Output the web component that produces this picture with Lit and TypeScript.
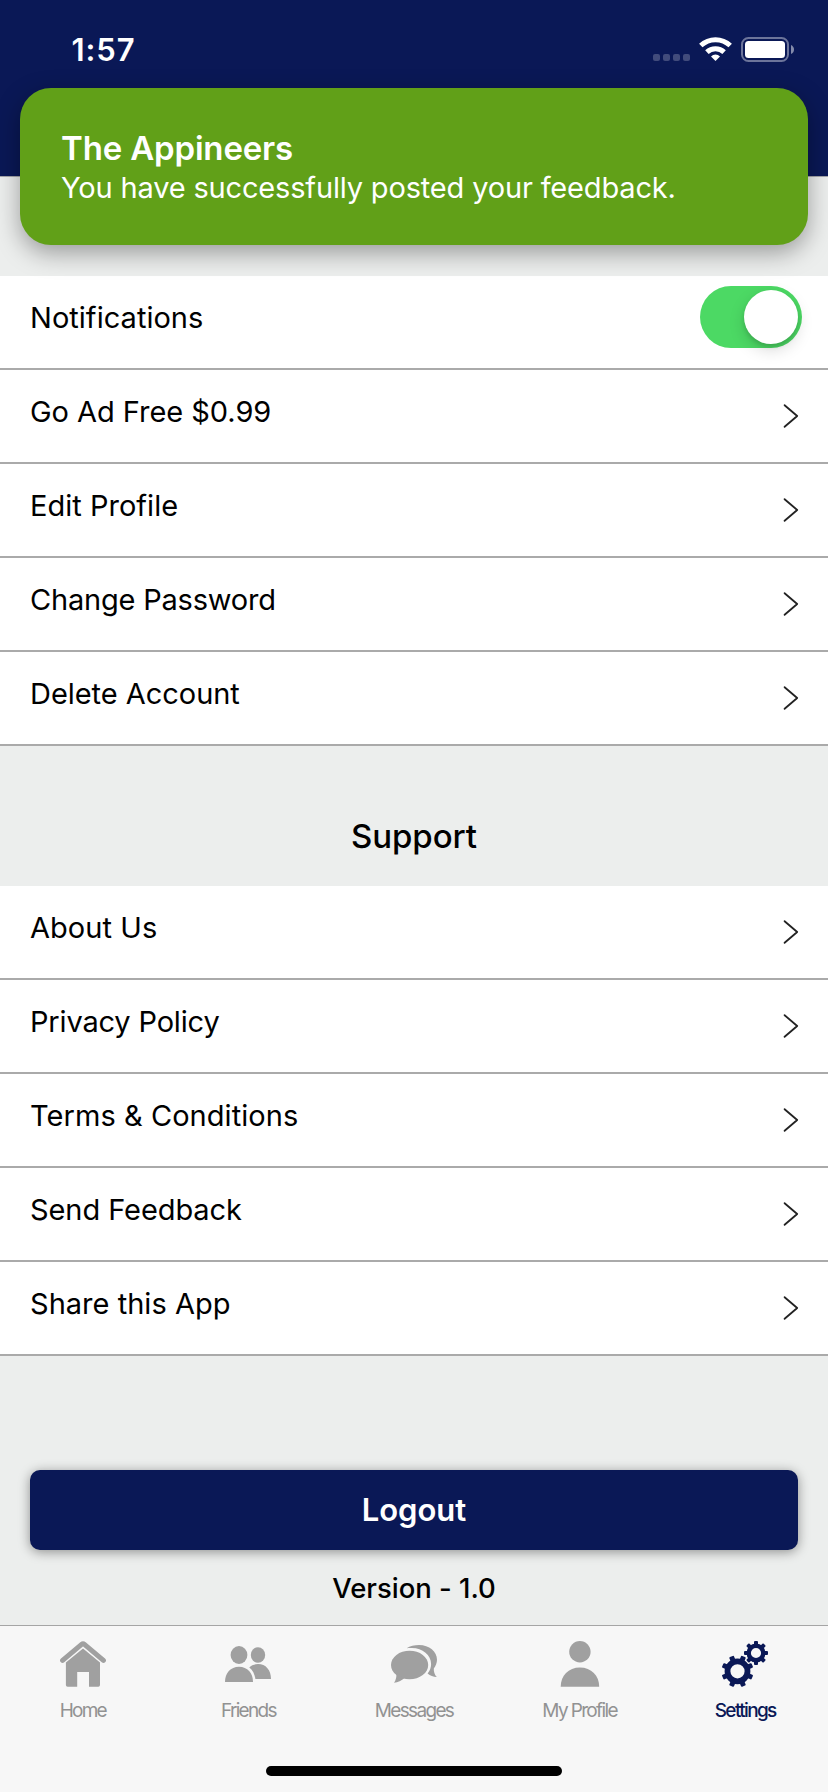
import { LitElement, html, svg, css } from "lit";
import { customElement, property } from "lit/decorators.js";
import { classMap } from "lit/directives/class-map.js";
import { styleMap } from "lit/directives/style-map.js";

interface Item {
  label: string;
  tracking: number;
  toggle?: boolean;
}

const ACCOUNT: Item[] = [
  { label: "Notifications", tracking: 0.03, toggle: true },
  { label: "Go Ad Free $0.99", tracking: -0.05 },
  { label: "Edit Profile", tracking: 0.02 },
  { label: "Change Password", tracking: -0.2 },
  { label: "Delete Account", tracking: -0.04 },
];

const SUPPORT: Item[] = [
  { label: "About Us", tracking: 0.05 },
  { label: "Privacy Policy", tracking: -0.17 },
  { label: "Terms & Conditions", tracking: 0.06 },
  { label: "Send Feedback", tracking: -0.08 },
  { label: "Share this App", tracking: 0.02 },
];

const gear = (
  cx: number,
  cy: number,
  ring: number,
  ringWidth: number,
  outer: number,
  tooth: number,
  offset: number
) => svg`
  <g transform="translate(${cx} ${cy})">
    <circle r=${ring} fill="none" stroke="currentColor" stroke-width=${ringWidth} />
    ${[0, 1, 2, 3, 4, 5, 6, 7].map(
      (i) => svg`<rect x=${-tooth / 2} y=${-outer} width=${tooth} height=${outer - ring}
        rx="1" transform="rotate(${i * 45 + offset})" fill="currentColor" />`
    )}
  </g>`;

const TABS = [
  {
    label: "Home",
    tracking: -1.82,
    icon: svg`
      <path d="M2.6 19.4 L21.6 3.4 Q23 2.2 24.4 3.4 L43.4 19.4" fill="none" stroke="currentColor"
        stroke-width="5" stroke-linecap="round" stroke-linejoin="round" />
      <path d="M23 7.4 L40 21.6 V44 Q40 45.7 38.3 45.7 H29 V31 H17.2 V45.7 H7.6 Q5.9 45.7 5.9 44 V21.6 Z"
        fill="currentColor" stroke="#f7f7f7" stroke-width="1.2" paint-order="stroke" />`,
  },
  {
    label: "Friends",
    tracking: -1.72,
    icon: svg`
      <g fill="currentColor">
        <ellipse cx="14" cy="14" rx="8.4" ry="9" />
        <path d="M0 41 C0 32 5.5 25.7 14 25.7 S28 32 28 41 Z" />
        <ellipse cx="33" cy="14" rx="7.2" ry="7.8" />
        <path d="M24.3 26.4 C26.5 24.2 29.5 23 33 23 C40.8 23 46 29 46 38 H30.4 C29.8 33.2 27.8 29 24.3 26.4 Z" />
      </g>`,
  },
  {
    label: "Messages",
    tracking: -1.65,
    icon: svg`
      <g fill="currentColor">
        <ellipse cx="18.6" cy="24" rx="18.6" ry="14.3" />
        <path d="M5.2 32 Q6 37.5 3 41.8 Q9 41 13.6 37 Z" />
        <path d="M15.6 7.2 C19 5.2 23.5 4 28 4 C38.3 4 46 10.4 46 18.8 C46 22 44.8 25 42.8 27.4
          C42.6 30.6 43.6 33.6 45.8 36 C42.4 35.8 39 34.6 36.6 32.4 C39 29.6 40.1 26.5 40.1 23
          C40.1 14.2 31.5 7 21 7 C19.1 7 17.4 6.9 15.6 7.2 Z" />
      </g>`,
  },
  {
    label: "My Profile",
    tracking: -1.65,
    icon: svg`
      <g fill="currentColor">
        <circle cx="22.9" cy="10.7" r="10.7" />
        <path d="M3.7 45.7 C3.7 34.5 11.5 26.4 22.9 26.4 S42.2 34.5 42.2 45.7 Z" />
      </g>`,
  },
  {
    label: "Settings",
    tracking: -1.65,
    active: true,
    icon: svg`${gear(15.5, 30.3, 10, 5.8, 16, 5, 22.5)}${gear(34, 12, 7.3, 4.4, 12, 4, 0)}`,
  },
];

@customElement("settings-row")
export class SettingsRow extends LitElement {
  @property() label = "";
  @property({ type: Number }) tracking = 0;
  @property({ type: Boolean }) toggle = false;

  static styles = css`
    :host {
      display: block;
    }
    .row {
      box-sizing: border-box;
      height: 94px;
      display: flex;
      justify-content: space-between;
      padding: 0 26px 0 30px;
      background: #fff;
      border-bottom: 2px solid #aaa;
    }
    .label {
      font-size: 29px;
      line-height: 83px;
      color: #000;
      white-space: nowrap;
    }
    .chevron {
      align-self: center;
      width: 16px;
      height: 26px;
      margin-right: 3px;
    }
    .switch {
      box-sizing: border-box;
      width: 102px;
      height: 62px;
      margin-top: 10px;
      padding: 4px;
      display: flex;
      justify-content: flex-end;
      border-radius: 31px;
      background: #4cd964;
    }
    .knob {
      width: 54px;
      height: 54px;
      border-radius: 50%;
      background: #fff;
      box-shadow: 0 6px 16px rgba(0, 0, 0, 0.15), 0 3px 4px rgba(0, 0, 0, 0.12);
    }
  `;

  render() {
    return html`<div class="row">
      <span class="label" style=${styleMap({ letterSpacing: `${this.tracking}px` })}>${this.label}</span>
      ${this.toggle
        ? html`<span class="switch"><span class="knob"></span></span>`
        : html`<svg class="chevron" viewBox="0 0 16 26">
            <path d="M1.6 2.2 L14.2 13 L1.6 23.8" fill="none" stroke="#222" stroke-width="1.8"
              stroke-linecap="round" stroke-linejoin="round" />
          </svg>`}
    </div>`;
  }
}

@customElement("app-root")
export class AppRoot extends LitElement {
  static styles = css`
    :host {
      display: block;
      font-family: Inter, "Liberation Sans", sans-serif;
    }
    .screen {
      position: relative;
      box-sizing: border-box;
      height: 1792px;
      overflow: hidden;
      display: flex;
      flex-direction: column;
      background: #eceeed;
    }
    .header {
      box-sizing: border-box;
      flex: none;
      height: 177px;
      padding: 30px 34px 0 71.5px;
      display: flex;
      justify-content: space-between;
      align-items: flex-start;
      background: #0a1856;
      border-bottom: 1px solid #a5a6aa;
    }
    .time {
      font-size: 31px;
      font-weight: 600;
      line-height: 40px;
      letter-spacing: 0.94px;
      color: #fff;
    }
    .indicators {
      display: flex;
      align-items: flex-end;
      padding-top: 7px;
    }
    .cell-dots {
      display: flex;
      gap: 3px;
      margin: 0 9px 1px 0;
    }
    .dot {
      width: 7px;
      height: 7px;
      border-radius: 2px;
      background: #414b7b;
    }
    .wifi {
      width: 33px;
      height: 24px;
      margin: 0 9px 1px 0;
    }
    .battery {
      width: 53px;
      height: 25px;
    }
    .banner {
      position: absolute;
      left: 20px;
      top: 88px;
      box-sizing: border-box;
      width: 788px;
      height: 157px;
      padding: 40px 41px 38px;
      border-radius: 31px;
      background: #61a018;
      color: #fff;
      box-shadow: 0 8px 24px rgba(0, 0, 0, 0.35);
      white-space: nowrap;
    }
    .banner-title {
      font-size: 33px;
      font-weight: 600;
      line-height: 40px;
      letter-spacing: -0.16px;
    }
    .banner-text {
      font-size: 29px;
      line-height: 39px;
      letter-spacing: -0.17px;
    }
    .group {
      flex: none;
    }
    .first {
      margin-top: 99px;
      position: relative;
    }
    .heading {
      box-sizing: border-box;
      height: 140px;
      padding-top: 70px;
      text-align: center;
      font-size: 33px;
      font-weight: 500;
      line-height: 40px;
      letter-spacing: -0.05px;
    }
    .logout {
      flex: none;
      height: 80px;
      margin: 114px 30px 0;
      border: 0;
      padding: 0;
      border-radius: 10px;
      background: #0a1856;
      color: #fff;
      font: 600 31px / 80px Inter, "Liberation Sans", sans-serif;
      text-align: center;
      box-shadow: 0 2px 12px rgba(0, 0, 0, 0.4);
    }
    .version {
      margin-top: 20px;
      flex: 1;
      text-align: center;
      font-size: 27.5px;
      font-weight: 500;
      line-height: 36px;
      letter-spacing: -0.02px;
    }
    .tabbar {
      box-sizing: border-box;
      flex: none;
      height: 167px;
      display: flex;
      flex-direction: column;
      align-items: center;
      background: #f7f7f7;
      border-top: 1px solid #a5a5a5;
    }
    .tabs {
      width: 100%;
      height: 140px;
      display: grid;
      grid-template-columns: repeat(5, 1fr);
    }
    .tab {
      display: flex;
      flex-direction: column;
      align-items: center;
      padding-top: 15px;
      color: #a0a0a0;
    }
    .tab-icon {
      width: 46px;
      height: 46px;
    }
    .tab-label {
      margin-top: 12px;
      font-size: 19px;
      line-height: 24px;
      color: #929292;
      white-space: nowrap;
    }
    .active,
    .active .tab-label {
      color: #0a1856;
    }
    .active .tab-label {
      font-weight: 500;
    }
    .home-indicator {
      width: 296px;
      height: 10px;
      border-radius: 5px;
      background: #000;
    }
  `;

  private rows(items: Item[]) {
    return items.map(
      (i) => html`<settings-row .label=${i.label} .tracking=${i.tracking} .toggle=${!!i.toggle}></settings-row>`
    );
  }

  render() {
    return html`<div class="screen">
      <header class="header">
        <span class="time">1:57</span>
        <div class="indicators">
          <div class="cell-dots">${[0, 1, 2, 3].map(() => html`<span class="dot"></span>`)}</div>
          <svg class="wifi" viewBox="0 0 33 24">
            <path d="M1.8 8.5 A21.4 21.4 0 0 1 31.2 8.5 M7.9 15.1 A12.4 12.4 0 0 1 25.1 15.1"
              fill="none" stroke="#fff" stroke-width="5" />
            <path d="M16.5 24 L12 19.4 A6.5 6.5 0 0 1 21 19.4 Z" fill="#fff" />
          </svg>
          <svg class="battery" viewBox="0 0 53 25">
            <rect x="1" y="1" width="46" height="23" rx="6.5" fill="none" stroke="#6c749a" stroke-width="2" />
            <rect x="4" y="4" width="40" height="17" rx="3.5" fill="#fff" />
            <path d="M50 8 Q53 9.5 53 12.5 T50 17 Z" fill="#848bab" />
          </svg>
        </div>
      </header>

      <section class="group first">${this.rows(ACCOUNT)}</section>
      <div class="heading">Support</div>
      <section class="group">${this.rows(SUPPORT)}</section>

      <button class="logout">Logout</button>
      <div class="version">Version - 1.0</div>

      <nav class="tabbar">
        <div class="tabs">
          ${TABS.map(
            (t) => html`<div class=${classMap({ tab: true, active: !!t.active })}>
              <svg class="tab-icon" viewBox="0 0 46 46">${t.icon}</svg>
              <span class="tab-label" style=${styleMap({ letterSpacing: `${t.tracking}px` })}>${t.label}</span>
            </div>`
          )}
        </div>
        <div class="home-indicator"></div>
      </nav>

      <div class="banner" role="status">
        <div class="banner-title">The Appineers</div>
        <div class="banner-text">You have successfully posted your feedback.</div>
      </div>
    </div>`;
  }
}
